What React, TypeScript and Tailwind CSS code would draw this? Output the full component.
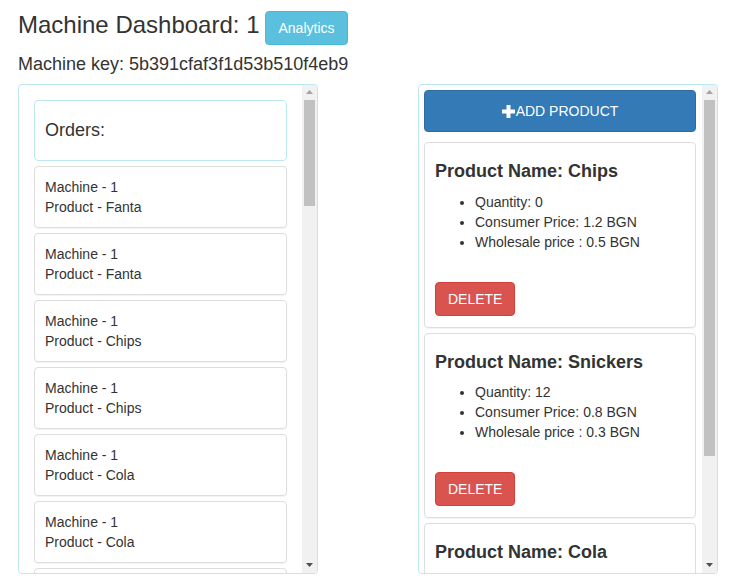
import React from "react";

const productsCycle = ["Fanta", "Fanta", "Chips", "Chips", "Cola", "Cola", "Snickers", "Snickers", "Chips", "Cola"];
const orders = Array.from({ length: 30 }, (_, i) => ({ machine: 1, product: productsCycle[i % productsCycle.length] }));

const products = [
  { name: "Chips", quantity: 0, consumer: "1.2", wholesale: "0.5" },
  { name: "Snickers", quantity: 12, consumer: "0.8", wholesale: "0.3" },
  { name: "Cola", quantity: 7, consumer: "1.5", wholesale: "0.7" },
];

function PlusIcon() {
  return (
    <svg width="13" height="13" viewBox="0 0 13 13" className="inline-block mr-[1px] -mt-[2px] align-middle" fill="white">
      <rect x="4.5" y="0" width="4" height="13" />
      <rect x="0" y="4.5" width="13" height="4" />
    </svg>
  );
}

// fake classic scrollbar (the page's own bars are not drawn in headless mode)
function ScrollBar({ thumb }: { thumb: number }) {
  return (
    <div className="w-[15px] shrink-0 bg-[#f1f1f1] flex flex-col">
      <div className="h-[15px] flex items-center justify-center">
        <svg width="7" height="4" viewBox="0 0 7 4" fill="#a3a3a3">
          <polygon points="3.5,0 7,4 0,4" />
        </svg>
      </div>
      <div className="flex-1">
        <div className="mx-[2px] bg-[#c1c1c1]" style={{ height: thumb }} />
      </div>
      <div className="h-[15px] flex items-center justify-center">
        <svg width="7" height="4" viewBox="0 0 7 4" fill="#505050">
          <polygon points="0,0 7,0 3.5,4" />
        </svg>
      </div>
    </div>
  );
}

export default function App() {
  return (
    <div className="min-h-screen bg-white pl-[18px] text-[#333] font-['Liberation_Sans',Arial,sans-serif]">
      {/* title row */}
      <div className="flex items-start gap-[6px] pt-[11px]">
        <h1 className="text-[24px] leading-[26.4px] font-normal mt-[1px]">Machine Dashboard: 1</h1>
        <button className="h-[34px] px-[12px] text-[14px] leading-[20px] text-white bg-[#5bc0de] border border-[#46b8da] rounded-[4px]">
          Analytics
        </button>
      </div>
      <h4 className="text-[18px] leading-[19.8px] mt-[10px] mb-[9px]">Machine key: 5b391cfaf3f1d53b510f4eb9</h4>

      <div className="flex gap-[100px]">
        {/* orders */}
        <div className="w-[300px] h-[490px] flex border border-[#bce8f1] rounded-[4px] overflow-hidden">
          <div className="flex-1 overflow-hidden p-[15px]">
            <div className="h-[61px] flex items-center pt-[2px] border border-[#bce8f1] rounded-[4px] px-[10px] mb-[5px]">
              <h3 className="text-[18px] leading-[19.8px]">Orders:</h3>
            </div>
            {orders.map((o, i) => (
              <div
                key={i}
                className="border border-[#ddd] rounded-[4px] p-[10px] mb-[5px] text-[14px] leading-[20px] shadow-[0_1px_1px_rgba(0,0,0,0.05)]"
              >
                <div>Machine - {o.machine}</div>
                <div>Product - {o.product}</div>
              </div>
            ))}
          </div>
          <ScrollBar thumb={106} />
        </div>

        {/* products */}
        <div className="w-[300px] h-[490px] flex border border-[#bce8f1] rounded-[4px] overflow-hidden">
          <div className="flex-1 overflow-hidden p-[5px] pr-[6px]">
            <button className="w-full h-[42px] text-[14px] leading-[20px] text-white bg-[#337ab7] border border-[#2e6da4] rounded-[4px] mb-[10px]">
              <PlusIcon />
              ADD PRODUCT
            </button>
            {products.map((p) => (
              <div
                key={p.name}
                className="border border-[#ddd] rounded-[4px] px-[10px] pt-[10px] pb-[11px] mb-[5px] shadow-[0_1px_1px_rgba(0,0,0,0.05)]"
              >
                <h4 className="text-[18px] leading-[19.8px] font-bold mt-[9px] mb-[10px]">Product Name: {p.name}</h4>
                <ul className="list-disc pl-[40px] text-[14px] leading-[20px] mb-[30px]">
                  <li>Quantity: {p.quantity}</li>
                  <li>Consumer Price: {p.consumer} BGN</li>
                  <li>Wholesale price : {p.wholesale} BGN</li>
                </ul>
                <button className="h-[34px] px-[12px] text-[14px] leading-[20px] text-white bg-[#d9534f] border border-[#d43f3a] rounded-[4px]">
                  DELETE
                </button>
              </div>
            ))}
          </div>
          <ScrollBar thumb={356} />
        </div>
      </div>
    </div>
  );
}
